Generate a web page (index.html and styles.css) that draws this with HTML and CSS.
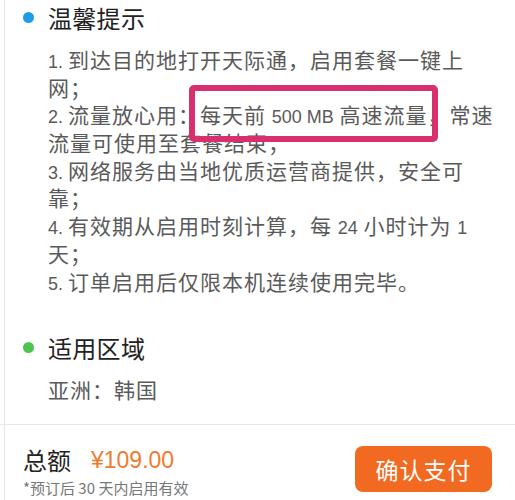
FILE: index.html
```html
<!DOCTYPE html>
<html lang="zh-CN">
<head>
<meta charset="utf-8">
<title>温馨提示</title>
<link rel="stylesheet" href="styles.css">
</head>
<body>
<div class="page">
  <section class="sec sec-tips">
    <h2 class="sec-title"><span class="dot dot-blue"></span><span class="title-text">温馨提示</span></h2>
    <div class="tips">
      <div class="ln"><span class="n">1. </span>到达目的地打开天际通，启用套餐一键上</div>
      <div class="ln">网；</div>
      <div class="ln"><span class="n">2. </span>流量放心用：<span class="hl">每天前 <span class="n">500 MB</span> 高速流量</span>，常速</div>
      <div class="ln">流量可使用至套餐结束；</div>
      <div class="ln"><span class="n">3. </span>网络服务由当地优质运营商提供，安全可</div>
      <div class="ln">靠；</div>
      <div class="ln"><span class="n">4. </span>有效期从启用时刻计算，每 <span class="n">24</span> 小时计为 <span class="n">1</span></div>
      <div class="ln">天；</div>
      <div class="ln"><span class="n">5. </span>订单启用后仅限本机连续使用完毕。</div>
    </div>
  </section>
  <section class="sec sec-area">
    <h2 class="sec-title"><span class="dot dot-green"></span><span class="title-text">适用区域</span></h2>
    <div class="ln area">亚洲：韩国</div>
  </section>
</div>
<footer class="bar">
  <div class="total">
    <div class="total-row"><span class="total-label">总额</span><span class="price">¥109.00</span></div>
    <div class="note">*预订后 30 天内启用有效</div>
  </div>
  <button class="pay">确认支付</button>
</footer>
</body>
</html>
```
FILE: styles.css
```css
html, body {
  margin: 0;
  padding: 0;
}
body {
  width: 515px;
  height: 500px;
  overflow: hidden;
  background: #fff linear-gradient(to right, transparent 4px, #e4e4e4 4px, #e4e4e4 5px, transparent 5px);
  font-family: "Noto Sans CJK SC", "Noto Sans", sans-serif;
  color: #5a5a5a;
}
.page {
  padding-left: 23px;
  height: 424px;
  box-sizing: border-box;
}
.sec-title {
  margin: 0;
  display: flex;
  align-items: center;
  gap: 14px;
  line-height: normal;
  font-size: 24px;
  font-weight: 400;
  color: #222;
  letter-spacing: 0.3px;
}
.dot {
  width: 11px;
  height: 11px;
  border-radius: 50%;
  flex: none;
}
.dot-blue { background: #1d9de6; }
.dot-green { background: #4cc550; }
.tips {
  margin-top: 11px;
  padding-left: 25px;
}
.ln {
  font-size: 21px;
  line-height: 27.7px;
  height: 27.7px;
  letter-spacing: 1px;
  white-space: nowrap;
}
.n {
  font-family: "Liberation Sans", sans-serif;
  font-size: 18px;
  letter-spacing: 0;
}
.hl {
  position: relative;
}
.hl::after {
  content: "";
  position: absolute;
  left: -11px;
  right: -10px;
  top: -14px;
  bottom: -13px;
  border: 6px solid #d8306f;
  border-radius: 5px;
}
.sec-area {
  margin-top: 35px;
}
.area {
  margin-top: 11px;
  padding-left: 25px;
}
.bar {
  border-top: 1px solid #e8e8e8;
  display: flex;
  justify-content: space-between;
  align-items: flex-start;
  padding: 20px 23px 0 23px;
  height: 75px;
  box-sizing: border-box;
}
.total-row {
  display: flex;
  align-items: center;
  gap: 20px;
  height: 30px;
}
.total-label {
  font-size: 24px;
  line-height: 30px;
  color: #222;
}
.price {
  font-family: "Liberation Sans", sans-serif;
  font-size: 23px;
  line-height: 30px;
  color: #ef7b2c;
}
.note {
  margin-top: 3px;
  font-size: 15px;
  line-height: 20px;
  color: #777;
}
.pay {
  margin-top: 1px;
  width: 137px;
  height: 46px;
  border: none;
  border-radius: 8px;
  background: #f26a21;
  color: #fff;
  font-family: "Noto Sans CJK SC", sans-serif;
  font-size: 23px;
  letter-spacing: 1px;
  padding: 0;
}
```
